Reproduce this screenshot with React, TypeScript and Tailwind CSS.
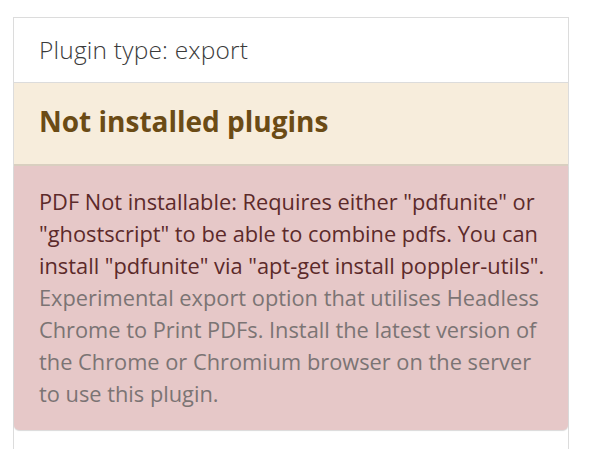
export default function App() {
  return (
    <div
      className="min-h-[449px] bg-white pt-[17px] pl-[13px] pr-[21px]"
      style={{ fontFamily: '"Open Sans", sans-serif' }}
    >
      <div className="flex min-h-[432px] flex-col border-x border-t border-[#dcdcdc]">
        {/* Header */}
        <div className="flex h-[65px] items-center border-b border-[#dcdcdc] px-[25px]">
          <h2 className="text-[24.5px] font-light tracking-[0.2px] text-[#3a3a3a]">Plugin type: export</h2>
        </div>

        {/* Section title */}
        <div className="flex h-[83px] items-center border-b-2 border-[#d9cfc0] bg-[#f7eddc] px-[25px] pb-[5px]">
          <h3 className="text-[28px] font-bold text-[#6b4b15]">Not installed plugins</h3>
        </div>

        {/* Alert */}
        <div className="rounded-b-[5px] bg-[#e6c8c8] pl-[25px] pr-[12px] py-[20px] text-[21.8px] leading-[32px] shadow-[0_1px_1px_rgba(0,0,0,0.15)]">
          <p className="text-[#5c2a2a]">
            PDF Not installable: Requires either "pdfunite" or "ghostscript" to be able to combine pdfs. You can
            install "pdfunite" via "apt-get install poppler-utils".
          </p>
          <p className="text-[#7b7474]">
            Experimental export option that utilises Headless Chrome to Print PDFs. Install the latest version of
            the Chrome or Chromium browser on the server to use this plugin.
          </p>
        </div>
      </div>
    </div>
  );
}
